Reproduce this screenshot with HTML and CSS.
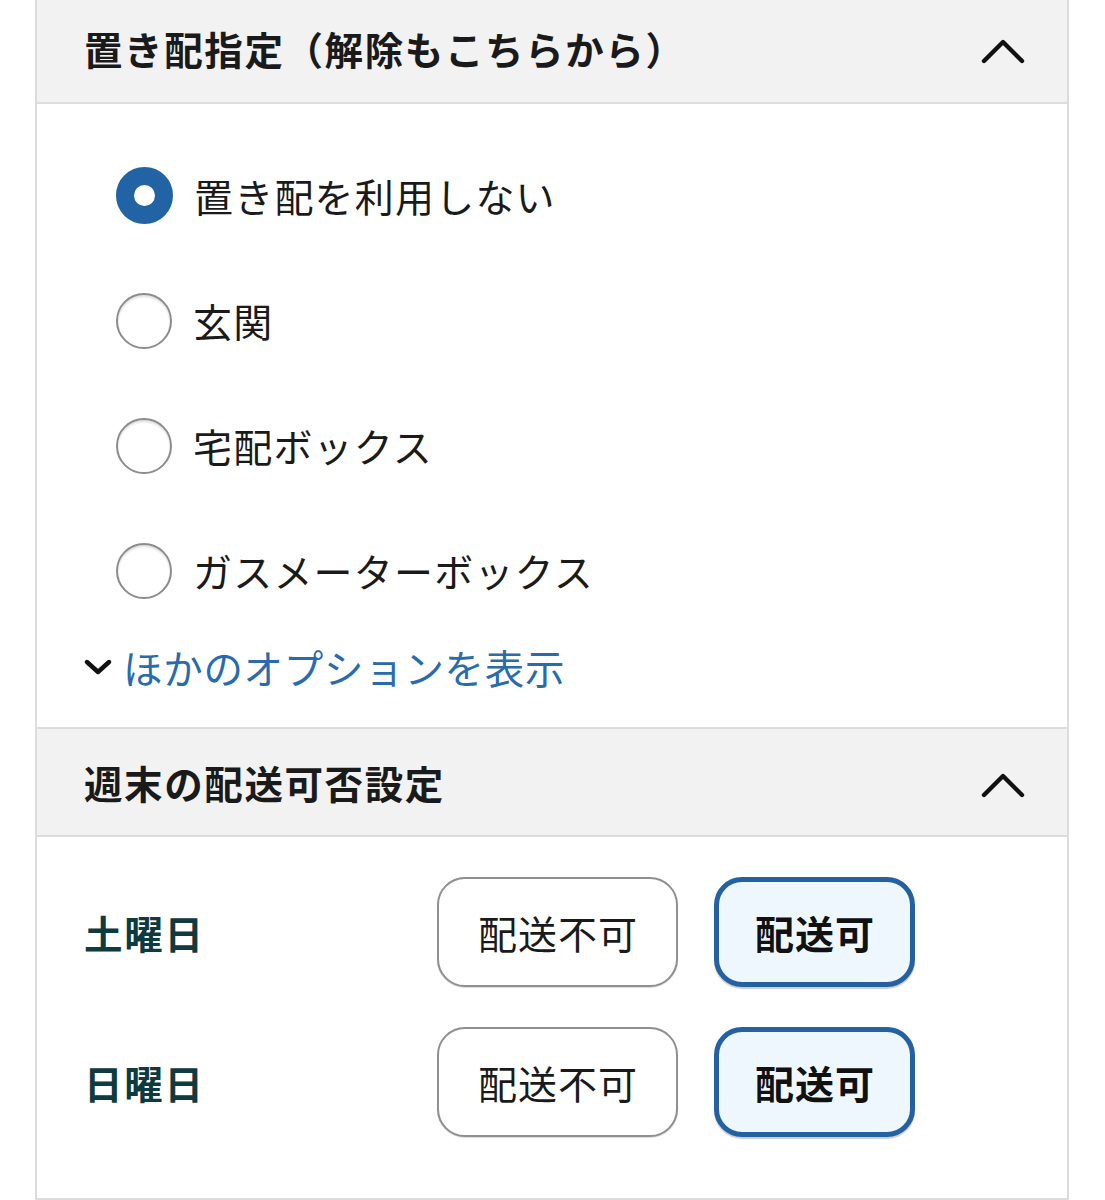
FILE: index.html
```html
<!DOCTYPE html>
<html lang="ja">
<head>
<meta charset="utf-8">
<link rel="stylesheet" href="styles.css">
</head>
<body>
<div class="panel">
  <div class="head head-first">
    <span class="head-title">置き配指定（解除もこちらから）</span>
    <svg class="chev-up" width="44" height="26" viewBox="0 0 44 26"><path d="M3 23 L22 4 L41 23" fill="none" stroke="#111" stroke-width="4.4" stroke-linecap="round" stroke-linejoin="round"/></svg>
  </div>
  <div class="body-options">
    <div class="option"><span class="radio radio-on"></span><span class="opt-label">置き配を利用しない</span></div>
    <div class="option"><span class="radio"></span><span class="opt-label">玄関</span></div>
    <div class="option"><span class="radio"></span><span class="opt-label">宅配ボックス</span></div>
    <div class="option"><span class="radio"></span><span class="opt-label">ガスメーターボックス</span></div>
    <div class="more">
      <svg class="chev-down" width="28" height="16" viewBox="0 0 28 16"><path d="M3 3 L14 13 L25 3" fill="none" stroke="#111" stroke-width="4.4" stroke-linecap="round" stroke-linejoin="round"/></svg>
      <span class="more-text">ほかのオプションを表示</span>
    </div>
  </div>
  <div class="head">
    <span class="head-title">週末の配送可否設定</span>
    <svg class="chev-up" width="44" height="26" viewBox="0 0 44 26"><path d="M3 23 L22 4 L41 23" fill="none" stroke="#111" stroke-width="4.4" stroke-linecap="round" stroke-linejoin="round"/></svg>
  </div>
  <div class="body-weekend">
    <div class="day-row">
      <span class="day">土曜日</span>
      <div class="btns">
        <span class="btn btn-no">配送不可</span>
        <span class="btn btn-yes">配送可</span>
      </div>
    </div>
    <div class="day-row">
      <span class="day">日曜日</span>
      <div class="btns">
        <span class="btn btn-no">配送不可</span>
        <span class="btn btn-yes">配送可</span>
      </div>
    </div>
  </div>
</div>
</body>
</html>
```

FILE: styles.css
```css
html, body {
  margin: 0;
  padding: 0;
  background: #ffffff;
}
body {
  font-family: "Noto Sans CJK JP", "Noto Sans", sans-serif;
  color: #1a1a1a;
}
.panel {
  margin: -6px 36px 0 35px;
  border-left: 2px solid #dcdcdc;
  border-right: 2px solid #dcdcdc;
  border-bottom: 2px solid #dcdcdc;
  height: 1206px;
  box-sizing: border-box;
}
.head {
  background: #f2f2f2;
  height: 110px;
  border-top: 2px solid #dcdcdc;
  border-bottom: 2px solid #dcdcdc;
  display: flex;
  align-items: center;
  justify-content: space-between;
  padding: 0 42px 0 47px;
  box-sizing: border-box;
}
.head-first {
  border-top: none;
  height: 110px;
}
.head-title {
  font-size: 38.5px;
  font-weight: 700;
  color: #1a1a1a;
  line-height: 1;
  letter-spacing: 1.6px;
}
.chev-up {
  display: block;
  margin-top: 6px;
}
.body-options {
  padding: 29px 0 26px 79px;
}
.option {
  height: 125px;
  display: flex;
  align-items: center;
}
.radio {
  width: 56px;
  height: 56px;
  border-radius: 50%;
  box-sizing: border-box;
  border: 2px solid #8c8c8c;
  background: #fff;
  box-shadow: inset 0 2px 2px rgba(0,0,0,0.12);
  flex: none;
}
.radio-on {
  width: 57px;
  height: 57px;
  border: 18.5px solid #2163a5;
  box-shadow: none;
}
.opt-label {
  font-size: 39px;
  line-height: 1;
  margin-left: 21px;
  color: #1a1a1a;
  letter-spacing: 1.2px;
}
.more {
  height: 68px;
  display: flex;
  align-items: center;
  margin-left: -32px;
}
.chev-down {
  display: block;
  margin-right: 11px;
}
.more-text {
  font-size: 39.5px;
  line-height: 1;
  color: #2a6bad;
  letter-spacing: 0.7px;
}
.body-weekend {
  padding: 40px 0 0 47px;
  display: flex;
  flex-direction: column;
  gap: 40px;
}
.day-row {
  display: flex;
  align-items: center;
}
.day {
  width: 353px;
  font-size: 38.5px;
  font-weight: 700;
  color: #0e3a40;
  line-height: 1;
  letter-spacing: 1.8px;
}
.btns {
  display: flex;
  gap: 36px;
}
.btn {
  height: 110px;
  box-sizing: border-box;
  border-radius: 28px;
  display: flex;
  align-items: center;
  justify-content: center;
  font-size: 39px;
  line-height: 1;
  letter-spacing: 1px;
  padding-left: 1px;
}
.btn-no {
  width: 241px;
  border: 2px solid #8f8f8f;
  background: #fff;
  color: #1a1a1a;
  box-shadow: 0 1px 1px rgba(0,0,0,0.15);
}
.btn-yes {
  width: 201px;
  border: 5px solid #2361a3;
  background: #eef7fd;
  font-weight: 700;
  color: #111;
  box-shadow: 0 2px 1px rgba(0,0,0,0.2);
}
```
